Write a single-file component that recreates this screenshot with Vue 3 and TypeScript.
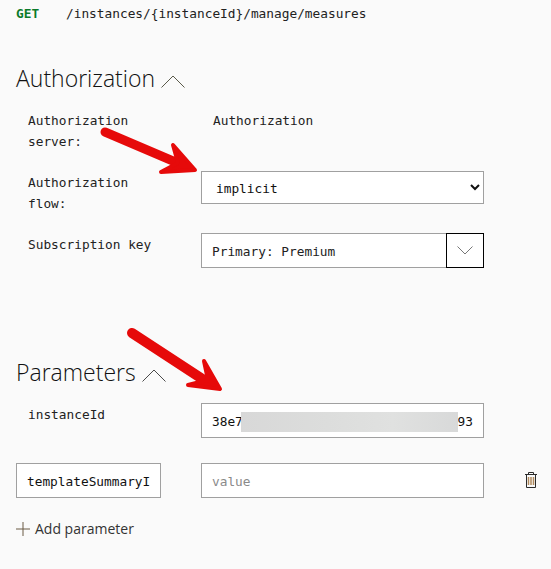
<template>
  <div class="console">
    <div class="request">
      <span class="request__method">GET</span>
      <span class="request__path">/instances/{instanceId}/manage/measures</span>
    </div>

    <h2 class="section-title section-title--auth">
      Authorization
      <svg class="section-title__chevron" width="24" height="13" viewBox="0 0 24 13" fill="none">
        <path d="M.5 12.500 12 1l11.500 11.500" stroke="#5a5a4a" stroke-width="1" />
      </svg>
    </h2>

    <div class="form form--auth">
      <div class="form__label">Authorization<br />server:</div>
      <div class="form__value">Authorization</div>

      <div class="form__label form__label--nudge">Authorization<br />flow:</div>
      <select v-model="flow" class="form__select">
        <option value="implicit">implicit</option>
      </select>

      <div class="form__label form__label--nudge">Subscription key</div>
      <div class="combo">
        <span class="combo__text">Primary: Premium</span>
        <span class="combo__btn">
          <svg width="16" height="9" viewBox="0 0 16 9" fill="none">
            <path d="M.5.5 8 8 15.500.5" stroke="#777" stroke-width="1" />
          </svg>
        </span>
      </div>
    </div>

    <h2 class="section-title section-title--params">
      Parameters
      <svg class="section-title__chevron" width="24" height="13" viewBox="0 0 24 13" fill="none">
        <path d="M.5 12.500 12 1l11.500 11.500" stroke="#4a4a4a" stroke-width="1" />
      </svg>
    </h2>

    <div class="form form--params">
      <div class="form__label form__label--nudge">instanceId</div>
      <div class="field">
        <span class="field__text">38e7</span>
        <span class="field__end">93</span>
        <div class="field__blur"></div>
      </div>
      <span></span>

      <div class="field field--name"><span class="field__name">templateSummaryI</span></div>
      <div class="field"><span class="field__text field__text--muted">value</span></div>
      <svg class="trash" width="12" height="16" viewBox="0 0 12 16" fill="none">
        <path d="M0 2.500h12M3.500 2.500V.5h5v2" stroke="#2b2b2b" stroke-width="1" />
        <path d="M1.500 2.500v13h9v-13" stroke="#2b2b2b" stroke-width="1" />
        <path d="M3.500 5v8M6 5v8M8.500 5v8" stroke="#b08a5e" stroke-width="1.500" />
      </svg>
    </div>

    <div class="add-param">
      <svg width="14" height="14" viewBox="0 0 14 14" fill="none">
        <path d="M7 0v14M0 7h14" stroke="#6b5a45" stroke-width="1" />
      </svg>
      <span>Add parameter</span>
    </div>

    <!-- annotation arrows drawn on top of the screenshot -->
    <svg class="arrows" width="551" height="569" viewBox="0 0 551 569" fill="none">
      <g stroke="#e60a0a" stroke-linecap="round" stroke-linejoin="round">
        <path d="M105 132 180 164" stroke-width="9" />
        <path d="M173 145 195 170 161 172 178 163Z" fill="#e60a0a" stroke-width="4" />
        <path d="M132 333 210 384" stroke-width="10" />
        <path d="M204 361 220 389 188 385 208 380Z" fill="#e60a0a" stroke-width="4" />
      </g>
    </svg>
  </div>
</template>

<script setup lang="ts">
import { ref } from 'vue';

const flow = ref('implicit');
</script>

<style scoped>
.console {
  position: relative;
  width: 551px;
  height: 569px;
  overflow: hidden;
  box-sizing: border-box;
  padding: 6px 0 0 16px;
  background: #fafafa;
  color: #222;
  font-family: "DejaVu Sans Mono", "Liberation Mono", monospace;
  font-size: 12.8px;
}

.request {
  display: flex;
  height: 16px;
  line-height: 16px;
}

.request__method {
  width: 50px;
  color: #0b7a2a;
  font-weight: 700;
}

.section-title {
  display: flex;
  align-items: flex-end;
  gap: 6px;
  margin: 0;
  font-family: "Open Sans", "Noto Sans", sans-serif;
  font-size: 23px;
  font-weight: 300;
  line-height: 32px;
  color: #111;
}

.section-title--auth {
  margin-top: 40px;
}

.section-title--params {
  margin-top: 88px;
}

.section-title__chevron {
  margin-bottom: 6px;
}

.form {
  display: grid;
  width: 468px;
  align-items: start;
}

.form--auth {
  grid-template-columns: 185px 283px;
  row-gap: 19px;
  margin-top: 16px;
}

.form--params {
  width: 530px;
  grid-template-columns: 185px 283px 62px;
  row-gap: 25px;
  margin-top: 15px;
}

.form__label {
  padding-left: 12px;
  line-height: 21px;
}

.form__label--nudge {
  padding-top: 1px;
}

.form__value {
  line-height: 21px;
  padding-left: 12px;
}

.form__select {
  box-sizing: border-box;
  width: 283px;
  height: 33px;
  padding: 2px 0 0 10px;
  border: 1px solid #a0a0a0;
  border-radius: 0;
  background-color: #fff;
  color: #111;
  font-family: inherit;
  font-size: inherit;
}

.combo {
  display: flex;
  box-sizing: border-box;
  height: 35px;
  border: 1px solid #a0a0a0;
  background: #fff;
}

.combo__text {
  flex: 1;
  padding-left: 10px;
  line-height: 35px;
}

.combo__btn {
  display: flex;
  align-items: center;
  justify-content: center;
  box-sizing: border-box;
  width: 38px;
  height: 35px;
  margin: -1px -1px 0 0;
  border: 1px solid #000;
}

.field {
  position: relative;
  display: flex;
  justify-content: space-between;
  box-sizing: border-box;
  height: 35px;
  padding: 0 10px;
  border: 1px solid #a0a0a0;
  background: #fff;
  line-height: 35px;
  color: #111;
}

.field--name {
  width: 145px;
  overflow: hidden;
  white-space: nowrap;
}

.field__text--muted {
  color: #8a8a8a;
}

.field__blur {
  position: absolute;
  top: 8px;
  left: 39px;
  width: 217px;
  height: 20px;
  background: linear-gradient(90deg, #d8d8d8, #dcdddc 40%, #e0e1e0 70%, #d8d9d9);
}

.trash {
  justify-self: start;
  margin: 9px 0 0 41px;
}

.add-param {
  display: flex;
  align-items: center;
  gap: 5px;
  margin-top: 21px;
  font-family: "Open Sans", "Noto Sans", sans-serif;
  font-size: 14px;
  line-height: 20px;
  color: #333;
}

.arrows {
  position: absolute;
  top: 0;
  left: 0;
  pointer-events: none;
}
</style>

<style>
body {
  background: #fafafa;
}
</style>
